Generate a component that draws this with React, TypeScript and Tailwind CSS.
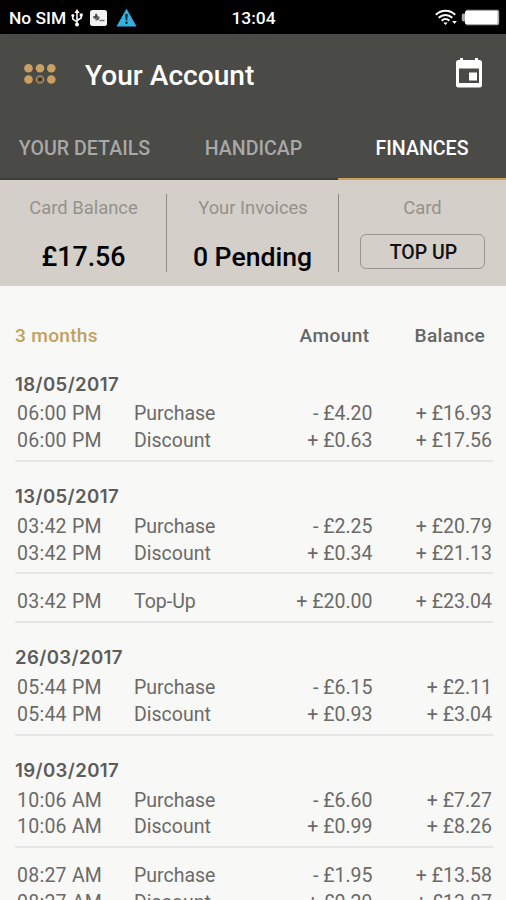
import { clsx } from "clsx";

type Entry = {
  time: string;
  label: string;
  amount: string;
  balance: string;
};

type Block = {
  date?: string;
  entries: Entry[];
};

const tabs = ["YOUR DETAILS", "HANDICAP", "FINANCES"];

const blocks: Block[] = [
  {
    date: "18/05/2017",
    entries: [
      { time: "06:00 PM", label: "Purchase", amount: "- £4.20", balance: "+ £16.93" },
      { time: "06:00 PM", label: "Discount", amount: "+ £0.63", balance: "+ £17.56" },
    ],
  },
  {
    date: "13/05/2017",
    entries: [
      { time: "03:42 PM", label: "Purchase", amount: "- £2.25", balance: "+ £20.79" },
      { time: "03:42 PM", label: "Discount", amount: "+ £0.34", balance: "+ £21.13" },
    ],
  },
  {
    entries: [
      { time: "03:42 PM", label: "Top-Up", amount: "+ £20.00", balance: "+ £23.04" },
    ],
  },
  {
    date: "26/03/2017",
    entries: [
      { time: "05:44 PM", label: "Purchase", amount: "- £6.15", balance: "+ £2.11" },
      { time: "05:44 PM", label: "Discount", amount: "+ £0.93", balance: "+ £3.04" },
    ],
  },
  {
    date: "19/03/2017",
    entries: [
      { time: "10:06 AM", label: "Purchase", amount: "- £6.60", balance: "+ £7.27" },
      { time: "10:06 AM", label: "Discount", amount: "+ £0.99", balance: "+ £8.26" },
    ],
  },
  {
    entries: [
      { time: "08:27 AM", label: "Purchase", amount: "- £1.95", balance: "+ £13.58" },
      { time: "08:27 AM", label: "Discount", amount: "+ £0.29", balance: "+ £13.87" },
    ],
  },
];

function StatusBar() {
  return (
    <div className="grid h-[34px] shrink-0 grid-cols-[1fr_auto_1fr] items-center bg-black pr-[6px] pl-[9px] pt-[2px] text-[17.4px] font-medium text-white">
      <div className="flex items-center">
        <span className="w-[56px] whitespace-nowrap">No SIM</span>
        {/* USB */}
        <svg width="12" height="18" viewBox="0 0 12 18" className="ml-[6px]" fill="none" stroke="#fff" strokeWidth="1.5">
          <path d="M6 3v12M6 13L1.800 10V7M6 11.500L10.200 9V6" />
          <path d="M6 0l2.500 4h-5z" fill="#fff" stroke="none" />
          <circle cx="6" cy="15.500" r="2" fill="#fff" stroke="none" />
          <circle cx="1.800" cy="6.500" r="1.500" fill="#fff" stroke="none" />
          <path d="M8.700 4.500h3v3h-3z" fill="#fff" stroke="none" />
        </svg>
        {/* Debug badge */}
        <svg width="17" height="16" viewBox="0 0 17 16" className="ml-[7px]">
          <rect width="17" height="16" rx="2.500" fill="#f2f2f2" />
          <path d="M6 3l2 3 2 1-1 2-3 2-1-2-2-1 2-2z" fill="#777" />
          <path d="M6 4v3M3 7h4M8 8v2" stroke="#222" strokeWidth="1" fill="none" />
          <path d="M9.500 10.500h5" stroke="#777" strokeWidth="1.500" />
        </svg>
        {/* Warning */}
        <svg width="21" height="19" viewBox="0 0 21 19" className="ml-[9px]">
          <path d="M10.500 0.500L20.500 18.500H0.500z" fill="#33b0dc" />
          <path d="M9.300 6h2.400l-.5 6.500h-1.400z" fill="#10242c" />
          <circle cx="10.500" cy="14.800" r="1.200" fill="#10242c" />
        </svg>
      </div>
      <span className="-ml-[2px]">13:04</span>
      <div className="-mt-px flex items-center justify-end">
        <svg width="22" height="17" viewBox="0 0 22 17" fill="none" stroke="#fff" strokeWidth="2" className="mr-[4px]">
          <path d="M0.800 5.800C6.500 0.400 14.500 0.400 20.200 5.800" />
          <path d="M3.700 8.800C7.700 5 13.300 5 17.300 8.800" />
          <path d="M6.600 11.800C9 9.600 12 9.600 14.400 11.800" />
          <path d="M8.300 13.500h4.400l-2.200 2.500z" fill="#fff" stroke="none" />
          <path d="M17.200 12h4.600l-2.300 3z" fill="#fff" stroke="none" />
        </svg>
        <svg width="39" height="17" viewBox="0 0 39 17">
          <path d="M5 1.500Q5 .8 6 .8H36Q38.200.8 38.200 3V14Q38.200 16.200 36 16.200H6Q5 16.200 5 15V12.500H2.500Q.8 12.500.8 10.800V6.200Q.8 4.500 2.500 4.500H5z" fill="#aaa" />
          <rect x="4" y="2" width="32.500" height="13" rx="1" fill="#fff" />
        </svg>
      </div>
    </div>
  );
}

function AppBar() {
  return (
    <div className="flex h-[82px] items-center pr-[23px] pl-6">
      <svg width="32" height="20" viewBox="0 0 32 20" className="-mt-[3px]" fill="#c9a060">
        <circle cx="4.500" cy="4.300" r="4.300" />
        <circle cx="16" cy="4.300" r="4.300" />
        <circle cx="27.300" cy="4.300" r="4.300" />
        <circle cx="4.500" cy="15.500" r="4.300" />
        <circle cx="16" cy="15.500" r="3.700" fill="#4a4a47" stroke="#b08d59" strokeWidth="1.300" />
        <path d="M13.700 14.700l2.300-1.500 2.300 1.500-.7 2.600h-3.200z" fill="#2b2721" stroke="#c9a060" strokeWidth=".5" />
        <circle cx="27.300" cy="15.500" r="4.300" />
      </svg>
      <h1 className="ml-[29px] pt-[3px] text-[28.1px] font-medium text-white">Your Account</h1>
      <svg width="28" height="30" viewBox="0 0 28 30" className="-mt-[4px] ml-auto" fill="#fff">
        <path
          fillRule="evenodd"
          d="M5 0h3v2h12V0h3v2h1.500a2.500 2.500 0 0 1 2.500 2.500v22.500a2.500 2.500 0 0 1-2.500 2.500h-21a2.500 2.500 0 0 1-2.500-2.500v-22.500a2.500 2.500 0 0 1 2.500-2.500h1.500zM4 10.500v14.500h20v-14.500z"
        />
        <path d="M14 14.500h8v8h-8z" />
      </svg>
    </div>
  );
}

function Tabs() {
  return (
    <div className="grid h-16 grid-cols-[169px_169px_168px] text-[19.6px] font-medium">
      {tabs.map((tab) => {
        const active = tab === "FINANCES";
        return (
          <div
            key={tab}
            className={clsx(
              "flex items-center justify-center border-b-2 pt-[3px] whitespace-nowrap",
              active ? "border-[#c9a25c] text-white" : "border-[#3d3d3b] text-[#a8a8a6]"
            )}
          >
            {tab}
          </div>
        );
      })}
    </div>
  );
}

function Summary() {
  return (
    <div className="grid h-[106px] shrink-0 grid-cols-[167px_172px_167px] bg-[#d4cfc9] py-[14px] text-center">
      <div className="flex flex-col items-center border-r border-[#8f8b86]">
        <span className="pl-px text-[18.4px] leading-7 text-[#95928c]">Card Balance</span>
        <span className="mt-[21px] pl-px text-[26.8px] leading-7 font-medium text-black">£17.56</span>
      </div>
      <div className="flex flex-col items-center border-r border-[#8f8b86]">
        <span className="pl-px text-[18.4px] leading-7 text-[#95928c]">Your Invoices</span>
        <span className="mt-[21px] text-[26.6px] leading-7 font-medium text-black">0 Pending</span>
      </div>
      <div className="flex flex-col items-center">
        <span className="text-[18.4px] leading-7 text-[#95928c]">Card</span>
        <button className="mt-3 h-[35px] w-[125px] shrink-0 rounded-md border-[1.5px] border-[#99958f] pt-[2px] pl-[2px] text-[19.5px] leading-7 font-medium text-[#111]">
          TOP UP
        </button>
      </div>
    </div>
  );
}

function TransactionBlock({ date, entries }: Block) {
  return (
    <section className="border-b-2 border-[#e6e6e4] pt-[14.8px] pb-[5.1px]">
      {date && (
        <h2 className="h-[37.4px] pt-[2.6px] font-['Inter',sans-serif] text-[18.6px] leading-[34.8px] font-semibold tracking-[0.38px] text-[#5c5c5a]">
          {date}
        </h2>
      )}
      {entries.map((entry, i) => (
        <div
          key={i}
          className="grid h-[26.67px] grid-cols-[119px_120px_1fr_120px] pr-px pl-[2px] text-[19.5px] leading-[26.67px] text-[#6a6a68]"
        >
          <span className="tracking-[0.25px]">{entry.time}</span>
          <span className="-ml-[2px]">{entry.label}</span>
          <span className="-mr-[0.5px] text-right">{entry.amount}</span>
          <span className="text-right">{entry.balance}</span>
        </div>
      ))}
    </section>
  );
}

export default function App() {
  return (
    <div className="flex h-[900px] w-[506px] flex-col overflow-hidden bg-[#f8f8f6] font-['Roboto',sans-serif]">
      <StatusBar />
      <header className="shrink-0 bg-[#4a4a47]">
        <AppBar />
        <Tabs />
      </header>
      <Summary />
      <main className="shrink-0 pt-[38px] pr-[13px] pl-[15px]">
        <div className="flex h-[25.200px] items-center text-[19.1px] font-medium text-[#666664]">
          <span className="tracking-[0.300px] text-[#c2a05e]">3 months</span>
          <span className="ml-auto tracking-[0.4px]">Amount</span>
          <span className="mr-[8px] ml-[45px] tracking-[0.3px]">Balance</span>
        </div>
        {blocks.map((block, i) => (
          <TransactionBlock key={i} {...block} />
        ))}
      </main>
    </div>
  );
}
